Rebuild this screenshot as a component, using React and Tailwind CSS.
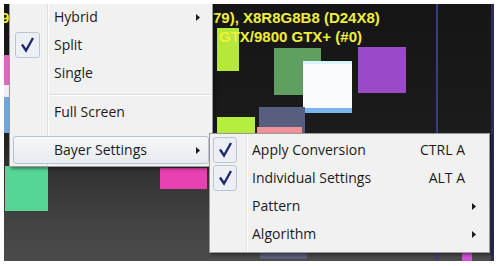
import React from "react";

const Arrow = () => (
  <svg width="4" height="7" viewBox="0 0 4 7" className="block">
    <path d="M0 0 L4 3.5 L0 7 Z" fill="#1a1a1a" />
  </svg>
);

const Check = ({ w = 25 }) => (
  <div
    className="h-[26px] rounded-[3px] border border-[#bcc6d3] bg-[#eceff3] flex items-center justify-center"
    style={{ width: w }}
  >
    <svg width={w - 2} height="24" viewBox={`0 0 ${w - 2} 24`}>
      <path d="M6 11.5 L10 17.5 L17 5" stroke="#1b2570" strokeWidth="2.3" fill="none" strokeLinejoin="miter" />
    </svg>
  </div>
);

function MainRow({ label, checked, arrow, active }) {
  return (
    <div
      className={
        "relative z-10 mx-[3px] h-[28px] flex items-center rounded-[3px] border " +
        (active
          ? "border-[#b7c2ce] bg-[linear-gradient(to_bottom,#f6f7f9,#e7ebef)]"
          : "border-transparent")
      }
    >
      <div className="w-[40px] pl-[1px] flex items-center">{checked ? <Check /> : null}</div>
      <span className="text-[14px] text-[#1b1b1b] leading-none">{label}</span>
      {arrow ? (
        <div className="ml-auto pr-[8px]">
          <Arrow />
        </div>
      ) : null}
    </div>
  );
}

function SubRow({ label, checked, shortcut, arrow }) {
  return (
    <div className="relative z-10 mx-[2px] h-[28px] flex items-center border border-transparent">
      <div className="w-[39px] flex items-center">{checked ? <Check w={24} /> : null}</div>
      <span className="flex-1 text-[14px] text-[#1b1b1b] leading-none">{label}</span>
      <span className="text-[14px] text-[#1b1b1b] leading-none">{shortcut}</span>
      <div className="w-[21px] pl-[7px] flex items-center">{arrow ? <Arrow /> : null}</div>
    </div>
  );
}

const hud = { fontFamily: '"Liberation Sans", Arial, sans-serif' };

export default function App() {
  return (
    <div
      className="w-[500px] h-[266px] bg-white pl-[4px] pt-[4px]"
      style={{ fontFamily: '"Open Sans", "Noto Sans", sans-serif' }}
    >
      <div className="relative w-[490px] h-[257px] overflow-hidden bg-[linear-gradient(to_bottom,#151515_0%,#1b1b1b_48%,#2d2d2d_60%,#434343_85%,#4b4b4b_100%)]">
        {/* canvas shapes */}
        <div className="absolute left-0 top-[51px] w-[20px] h-[30px] bg-[#dd68c0]" />
        <div className="absolute left-0 top-[81px] w-[20px] h-[12px] bg-[#f4eef4]" />
        <div className="absolute left-0 top-[93px] w-[20px] h-[36px] bg-[#6fa6e0]" />
        <div className="absolute left-[1px] top-[162px] w-[43px] h-[45px] bg-[#55d596]" />
        <div className="absolute left-[156px] top-[164px] w-[47px] h-[21px] bg-[#e842b2]" />
        <div className="absolute left-[270px] top-[44px] w-[47px] h-[47px] bg-[#5f9f60]" />
        <div className="absolute left-[299px] top-[57px] w-[49px] h-[47px] bg-[#f8fcff] border-t-[3px] border-[#d6f4fa]" />
        <div className="absolute left-[301px] top-[104px] w-[47px] h-[5px] bg-[#7ab6ee]" />
        <div className="absolute left-[354px] top-[43px] w-[48px] h-[46px] bg-[#9a4ac6]" />
        <div className="absolute left-[255px] top-[103px] w-[46px] h-[40px] bg-[#585e80]" />
        <div className="absolute left-[213px] top-[113px] w-[38px] h-[30px] bg-[#b6ee3e]" />
        <div className="absolute left-[253px] top-[123px] w-[45px] h-[20px] bg-[#f0929a]" />
        <div className="absolute left-[432px] top-0 w-[2px] h-[257px] bg-[#3c3a8c]" />
        <div className="absolute left-[487px] top-0 w-[3px] h-[257px] bg-[#2c2c58]" />
        <div className="absolute left-[458px] top-[236px] w-[10px] h-[22px] bg-[#d050d8]" />
        <div className="absolute left-[256px] top-[240px] w-[47px] h-[15px] bg-[#5a5f78]" />
        <div className="absolute left-[213px] top-[24px] w-[22px] h-[43px] bg-[#b6e83c]" />

        {/* HUD text */}
        <div className="absolute left-[-3px] top-[4px] text-[15px] leading-[19px] font-bold text-[#f2ef3a]" style={hud}>
          9
        </div>
        <div
          className="absolute left-[209px] top-[4px] flex flex-col whitespace-nowrap text-[15px] leading-[19px] font-bold text-[#f2ef3a]"
          style={hud}
        >
          <span>79), X8R8G8B8 (D24X8)</span>
          <span className="pl-[6px]">GTX/9800 GTX+ (#0)</span>
        </div>

        {/* Main menu */}
        <div className="absolute left-[5px] top-[-2px] w-[204px] bg-[#f1f1f1] border-x border-b border-[#9a9a9a] pt-[1px] pb-[2px] shadow-[2px_2px_3px_rgba(0,0,0,0.4)]">
          <div className="absolute left-[37px] top-0 bottom-0 w-[2px] border-l border-[#dedede] bg-white" />
          <MainRow label="Hybrid" arrow />
          <MainRow label="Split" checked />
          <MainRow label="Single" />
          <div className="relative z-10 h-[11px] pt-[7px] pl-[40px]">
            <div className="h-[1px] bg-[#dcdcdc]" />
            <div className="h-[1px] bg-white" />
          </div>
          <MainRow label="Full Screen" />
          <div className="h-[10px]" />
          <MainRow label="Bayer Settings" arrow active />
        </div>

        {/* Sub menu */}
        <div className="absolute left-[205px] top-[129px] w-[281px] bg-[#f1f1f1] border border-[#9a9a9a] pt-[2px] pb-[4px] shadow-[2px_2px_3px_rgba(0,0,0,0.4)]">
          <div className="absolute left-[36px] top-0 bottom-0 w-[2px] border-l border-[#dedede] bg-white" />
          <SubRow label="Apply Conversion" checked shortcut="CTRL A" />
          <SubRow label="Individual Settings" checked shortcut="ALT A" />
          <SubRow label="Pattern" arrow />
          <SubRow label="Algorithm" arrow />
        </div>
      </div>
    </div>
  );
}
